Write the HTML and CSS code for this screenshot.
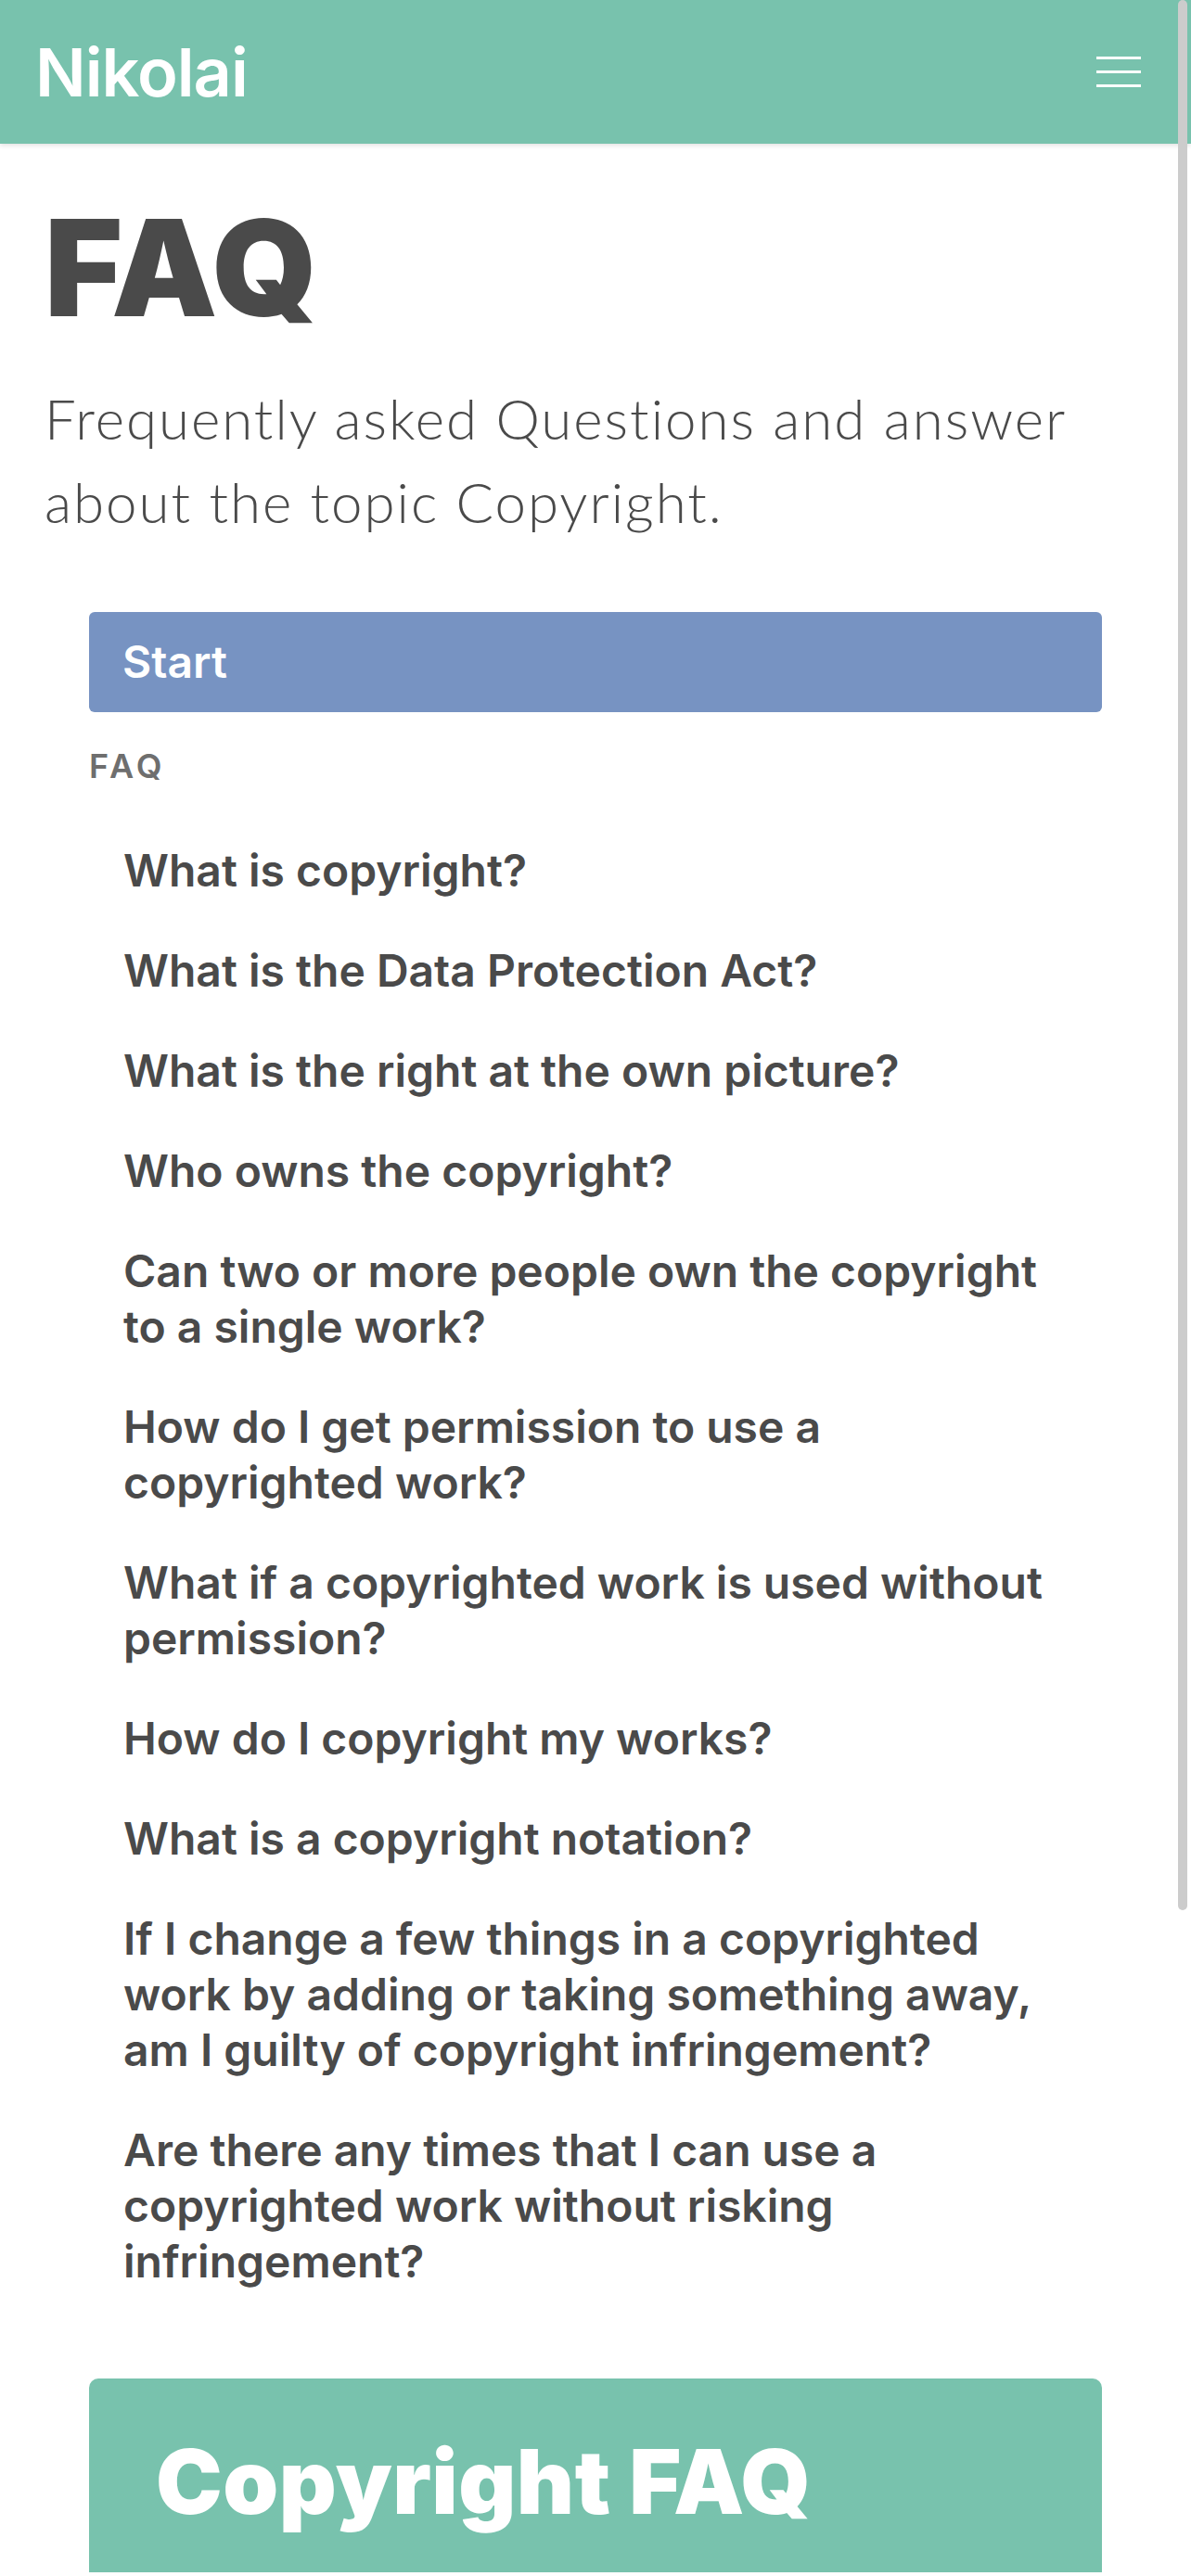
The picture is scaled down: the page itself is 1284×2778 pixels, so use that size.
FILE: index.html
```html
<!DOCTYPE html>
<html lang="en">
<head>
<meta charset="utf-8">
<title>FAQ - Nikolai</title>
<link rel="stylesheet" href="styles.css">
</head>
<body>
<header class="navbar">
  <a class="brand" href="#">Nikolai</a>
  <button class="toggler" aria-label="Menu">
    <span class="toggler-bar"></span>
    <span class="toggler-bar"></span>
    <span class="toggler-bar"></span>
  </button>
</header>
<main class="page">
  <h1 class="title">FAQ</h1>
  <p class="lead">Frequently asked Questions and answer about the topic Copyright.</p>
  <nav class="toc">
    <a class="toc-start" href="#">Start</a>
    <div class="toc-label">FAQ</div>
    <ul class="toc-list">
      <li><a href="#">What is copyright?</a></li>
      <li><a href="#">What is the Data Protection Act?</a></li>
      <li><a href="#">What is the right at the own picture?</a></li>
      <li><a href="#">Who owns the copyright?</a></li>
      <li><a href="#">Can two or more people own the copyright to a single work?</a></li>
      <li><a href="#">How do I get permission to use a copyrighted work?</a></li>
      <li><a href="#">What if a copyrighted work is used without permission?</a></li>
      <li><a href="#">How do I copyright my works?</a></li>
      <li><a href="#">What is a copyright notation?</a></li>
      <li><a href="#">If I change a few things in a copyrighted work by adding or taking something away, am I guilty of copyright infringement?</a></li>
      <li><a href="#">Are there any times that I can use a copyrighted work without risking infringement?</a></li>
    </ul>
  </nav>
  <section class="card">
    <h2 class="card-title">Copyright FAQ</h2>
  </section>
</main>
<div class="scroll-thumb"></div>
</body>
</html>
```
FILE: styles.css
```css
html, body {
  margin: 0;
  padding: 0;
  background: #ffffff;
}
body {
  font-family: Inter, "Noto Sans", sans-serif;
  color: #4a4a4a;
  overflow: hidden;
}
a {
  color: inherit;
  text-decoration: none;
}

.navbar {
  height: 155px;
  background: #78c2ad;
  display: flex;
  align-items: center;
  justify-content: space-between;
  padding: 0 54px 0 38px;
  box-shadow: 0 2px 5px rgba(0, 0, 0, 0.12);
  position: relative;
  z-index: 1;
}
.brand {
  color: #ffffff;
  font-size: 72px;
  font-weight: 600;
  line-height: 1;
  letter-spacing: -1px;
}
.toggler {
  display: flex;
  flex-direction: column;
  gap: 12px;
  width: 48px;
  padding: 0;
  border: 0;
  background: transparent;
}
.toggler-bar {
  display: block;
  width: 48px;
  height: 3px;
  background: #ffffff;
}

.page {
  padding: 0 48px;
}
.title {
  margin: 62px 0 0;
  font-size: 144px;
  line-height: 144px;
  font-weight: 900;
  letter-spacing: 1px;
  color: #4a4a4a;
}
.lead {
  margin: 45px 0 0;
  font-family: Lato, "Open Sans", sans-serif;
  font-weight: 300;
  font-size: 60px;
  line-height: 90px;
  letter-spacing: 2px;
  color: #4a4a4a;
}

.toc {
  margin: 74px 48px 0;
}
.toc-start {
  display: block;
  height: 108px;
  padding: 0 36px;
  line-height: 108px;
  background: #7793c2;
  color: #ffffff;
  font-size: 48px;
  font-weight: 600;
  border-radius: 6px;
}
.toc-label {
  margin-top: 31px;
  font-size: 36px;
  line-height: 54px;
  font-weight: 600;
  letter-spacing: 4px;
  color: #6e6e6e;
}
.toc-list {
  list-style: none;
  margin: 56px 0 0;
  padding: 0 36px 0 37px;
  display: flex;
  flex-direction: column;
  gap: 48px;
}
.toc-list li {
  font-size: 48px;
  line-height: 60px;
  font-weight: 600;
  letter-spacing: 0;
  color: #4a4a4a;
}

.card {
  margin: 96px 48px 0;
  background: #78c2ad;
  border-radius: 10px 10px 0 0;
  padding: 54px 72px 40px;
}
.card-title {
  margin: 0;
  color: #ffffff;
  font-size: 96px;
  line-height: 115px;
  font-weight: 900;
  letter-spacing: 0.5px;
}

.scroll-thumb {
  position: fixed;
  top: 0;
  right: 4px;
  width: 10px;
  height: 2060px;
  background: #cccccc;
  border-radius: 5px;
  z-index: 5;
}
```
